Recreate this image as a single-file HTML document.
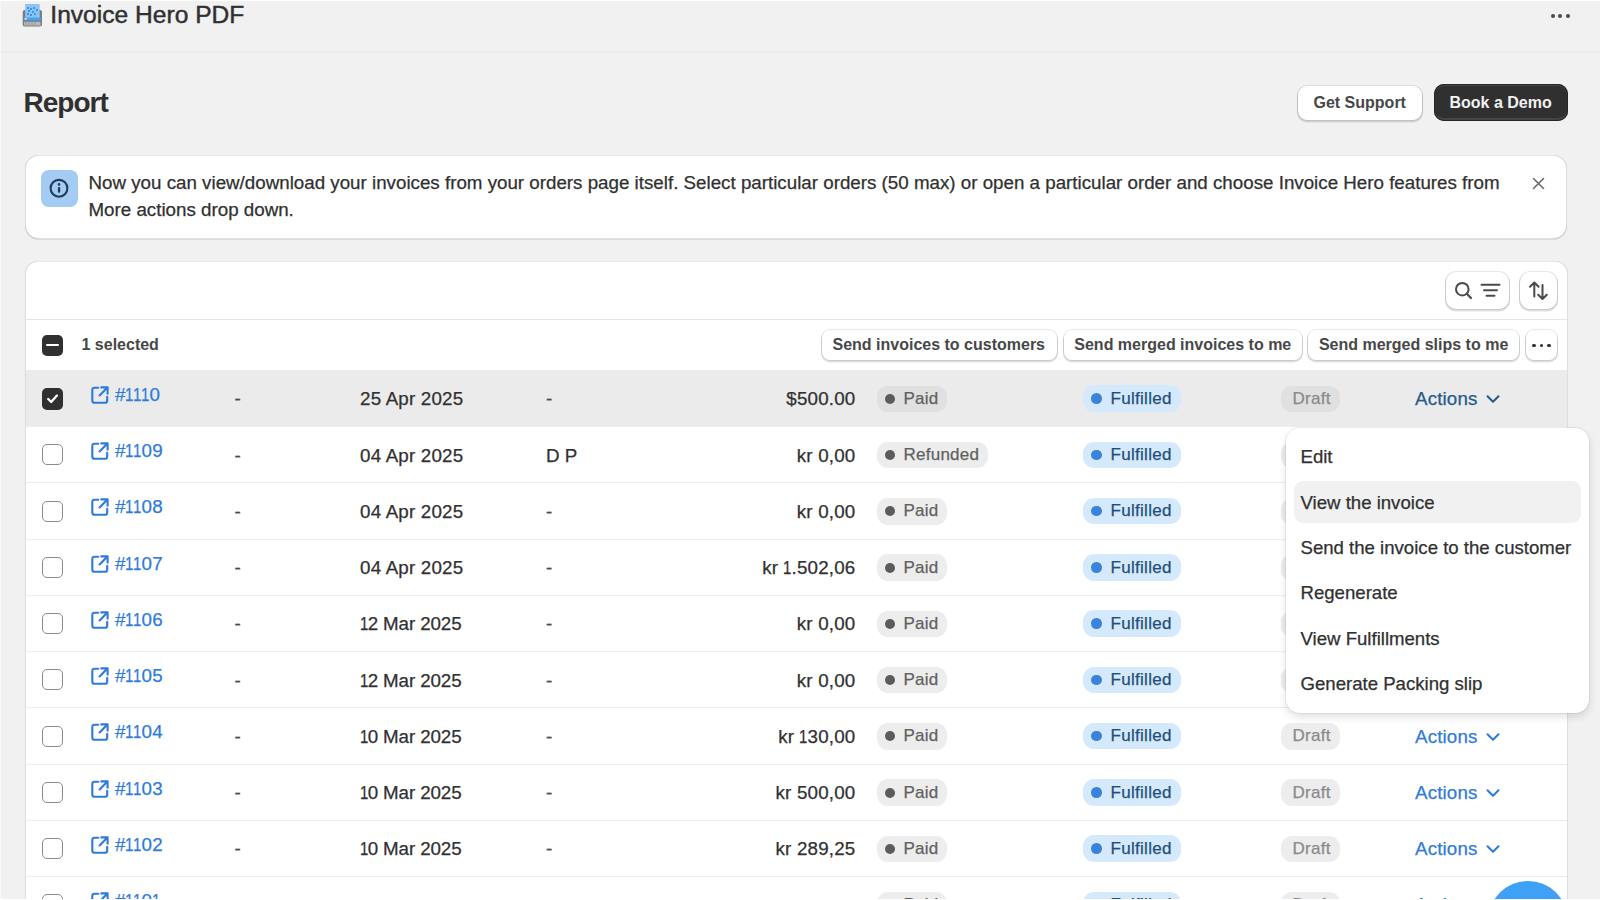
<!DOCTYPE html>
<html><head><meta charset="utf-8"><title>Invoice Hero PDF - Report</title>
<style>
html,body{margin:0;padding:0;width:1600px;height:900px;overflow:hidden;background:#f1f1f1;font-family:"Liberation Sans",sans-serif;color:#303030}
.t{position:absolute;white-space:nowrap;-webkit-text-stroke:0.25px currentColor}
.one{display:inline-block;transform:scaleX(.8);margin:0 -1.35px}
.card{position:absolute;background:#fff;box-shadow:inset 0 1px 0 rgba(204,204,204,.45),inset 1px 0 0 rgba(0,0,0,.13),inset -1px 0 0 rgba(0,0,0,.13),inset 0 -1px 0 rgba(0,0,0,.12),0 1px 1px rgba(0,0,0,.1)}
.btn{position:absolute;background:#fff;border-radius:9px;box-shadow:0 0 0 1px rgba(0,0,0,.09),0 1.5px 0 1px rgba(0,0,0,.12)}
.btn.sm{border-radius:8px}
.btnd{position:absolute;background:#303030;border-radius:10px;box-shadow:inset 0 0 0 1px #262626,inset 0 2px 0 rgba(255,255,255,.1),inset 0 -3px 0 rgba(255,255,255,.1)}
.cb{position:absolute;width:20.5px;height:21px;box-sizing:border-box;border:1.6px solid #8c8c8c;border-radius:5px;background:#fff}
.cb.on{background:#303030;border:none;height:21.3px;width:21px}
.badge{position:absolute;height:26.5px;border-radius:11px}
.pop{position:absolute;background:#fff;border-radius:14px;box-shadow:0 0 0 1px rgba(0,0,0,.06),0 4px 8px rgba(0,0,0,.12)}
</style></head><body>
<div style="position:absolute;left:0;top:0;width:1600px;height:1px;background:#fff"></div><div style="position:absolute;left:0;top:51px;width:1600px;height:2px;background:#ececec"></div><svg style="position:absolute;left:21px;top:3px" width="23" height="25" viewBox="21 3 23 25">
<rect x="22.7" y="10" width="19.3" height="16.5" rx="2" fill="#7c7c7c"/>
<rect x="24" y="21.5" width="16.5" height="4" fill="#b9b9b9"/>
<path d="M26 22v3.5M29 22v3.5M32 22v3.5M35 22v3.5" stroke="#8a8a8a" stroke-width="0.8"/>
<rect x="25.2" y="4" width="14.5" height="17" fill="#8cc4f7"/>
<path d="M27 7h2v2h-2zM30 8h2v2h-2zM33 7h2v2h-2zM28 10h2v2h-2zM32 11h2v2h-2zM27 13h2v2h-2zM30 14h2v2h-2zM34 13h2v2h-2zM36 9h2v2h-2z" fill="#3d95ef"/>
<rect x="24" y="17.5" width="17" height="3" fill="#4a9ff0"/>
<rect x="24.5" y="18.3" width="2.5" height="1.2" fill="#e6f2ff"/>
<rect x="24" y="20.3" width="17" height="1.2" fill="#5c7fa3"/>
</svg><div class="t" style="left:50.30px;top:-1.02px;font-size:24.6px;line-height:32px;color:#303030;font-weight:400;-webkit-text-stroke:0.45px #303030">Invoice Hero PDF</div>
<div style="position:absolute;left:1550.6px;top:13.75px;width:4px;height:4px;border-radius:50%;background:#4a4a4a"></div><div style="position:absolute;left:1558.1px;top:13.75px;width:4px;height:4px;border-radius:50%;background:#4a4a4a"></div><div style="position:absolute;left:1565.5px;top:13.75px;width:4px;height:4px;border-radius:50%;background:#4a4a4a"></div><div class="t" style="left:23.50px;top:85.00px;font-size:28px;line-height:36px;color:#303030;font-weight:700;-webkit-text-stroke:0;letter-spacing:-1px">Report</div>
<div class="btn" style="left:1298px;top:85.5px;width:124px;height:34.5px"></div><div class="t" style="left:1313.50px;top:91.96px;font-size:16px;line-height:21px;color:#474747;font-weight:700;-webkit-text-stroke:0;">Get Support</div>
<div class="btnd" style="left:1434px;top:84px;width:134px;height:37px"></div><div class="t" style="left:1449.50px;top:91.96px;font-size:16px;line-height:21px;color:#f2f2f2;font-weight:700;-webkit-text-stroke:0;">Book a Demo</div>
<div class="card" style="left:25px;top:155px;width:1542px;height:83.5px;border-radius:14px"></div><div style="position:absolute;left:40.5px;top:169.5px;width:37px;height:37.5px;border-radius:8px;background:#a3cbf3"></div><svg style="position:absolute;left:48px;top:177px" width="22" height="22" viewBox="0 0 22 22">
<circle cx="11" cy="11.3" r="8.4" fill="none" stroke="#1f3b57" stroke-width="2.1"/>
<rect x="9.9" y="10" width="2.3" height="5.8" rx="1" fill="#1f3b57"/>
<circle cx="11.05" cy="7.4" r="1.3" fill="#1f3b57"/>
</svg><div class="t" style="left:88.50px;top:170.90px;font-size:18.75px;line-height:24px;color:#303030;font-weight:400;">Now you can view/download your invoices from your orders page itself. Select particular orders (50 max) or open a particular order and choose Invoice Hero features from</div>
<div class="t" style="left:88.50px;top:198.20px;font-size:18.75px;line-height:24px;color:#303030;font-weight:400;">More actions drop down.</div>
<svg style="position:absolute;left:1532px;top:177px" width="13" height="13" viewBox="0 0 13 13">
<path d="M1.5 1.5L11.5 11.5M11.5 1.5L1.5 11.5" stroke="#6b6b6b" stroke-width="1.6" stroke-linecap="round"/>
</svg><div class="card" style="left:25px;top:261px;width:1543px;height:760px;border-radius:13px;overflow:hidden"></div><div style="position:absolute;left:26px;top:319px;width:1541px;height:1px;background:#e6e6e6"></div><div class="btn" style="left:1445.5px;top:272px;width:63px;height:36.5px;border-radius:10px"></div><svg style="position:absolute;left:1450px;top:277px" width="55" height="27" viewBox="0 0 55 27">
<circle cx="12.3" cy="12.2" r="6.3" fill="none" stroke="#4a4a4a" stroke-width="2"/>
<path d="M16.8 16.7L21 21" stroke="#4a4a4a" stroke-width="2.2" stroke-linecap="round"/>
<path d="M31.5 7.8H49.5M34 13.3H47M36.5 18.8H44.5" stroke="#4a4a4a" stroke-width="2" stroke-linecap="round"/>
</svg><div class="btn" style="left:1520px;top:272px;width:36.5px;height:36.5px;border-radius:10px"></div><svg style="position:absolute;left:1525px;top:277px" width="27" height="27" viewBox="0 0 27 27">
<path d="M9.3 19.5V5.5M5 9.8L9.3 5.5L13.6 9.8" fill="none" stroke="#4a4a4a" stroke-width="2" stroke-linecap="round" stroke-linejoin="round"/>
<path d="M17.5 8V22M13.2 17.7L17.5 22L21.8 17.7" fill="none" stroke="#4a4a4a" stroke-width="2" stroke-linecap="round" stroke-linejoin="round"/>
</svg><div class="cb on" style="left:42px;top:334.5px"><div style="position:absolute;left:4.3px;top:9.4px;width:12.5px;height:2.5px;border-radius:1.25px;background:#fff"></div></div><div class="t" style="left:81.50px;top:334.26px;font-size:16px;line-height:21px;color:#474747;font-weight:700;-webkit-text-stroke:0;">1 selected</div>
<div class="btn sm" style="left:822px;top:330px;width:235px;height:30px"></div><div class="t" style="left:832.50px;top:333.96px;font-size:16px;line-height:21px;color:#474747;font-weight:700;-webkit-text-stroke:0;">Send invoices to customers</div>
<div class="btn sm" style="left:1063.8px;top:330px;width:238.5px;height:30px"></div><div class="t" style="left:1074.30px;top:333.96px;font-size:16px;line-height:21px;color:#474747;font-weight:700;-webkit-text-stroke:0;">Send merged invoices to me</div>
<div class="btn sm" style="left:1308.4px;top:330px;width:211px;height:30px"></div><div class="t" style="left:1318.90px;top:333.96px;font-size:16px;line-height:21px;color:#474747;font-weight:700;-webkit-text-stroke:0;">Send merged slips to me</div>
<div class="btn sm" style="left:1526px;top:330px;width:30.5px;height:30px"></div><div style="position:absolute;left:1531.9px;top:343.5px;width:3.8px;height:3.8px;border-radius:50%;background:#303030"></div><div style="position:absolute;left:1539.6px;top:343.5px;width:3.8px;height:3.8px;border-radius:50%;background:#303030"></div><div style="position:absolute;left:1547.4px;top:343.5px;width:3.8px;height:3.8px;border-radius:50%;background:#303030"></div><div style="position:absolute;left:26px;top:369.5px;width:1541px;height:1px;background:#e3e3e3"></div><div style="position:absolute;left:26px;top:370.25px;width:1541px;height:56.25px;background:#ebebeb"></div><div style="position:absolute;left:26px;top:426.00px;width:1541px;height:1px;background:#ececec"></div><div class="cb on" style="left:42px;top:388.25px"><svg style="position:absolute;left:3px;top:3px" width="15" height="15" viewBox="0 0 15 15"><path d="M3.2 8L6.2 11L11.9 4.6" fill="none" stroke="#fff" stroke-width="2.3" stroke-linecap="round" stroke-linejoin="round"/></svg></div><svg style="position:absolute;left:89.5px;top:384.75px" width="20" height="20" viewBox="0 0 20 20">
<path d="M8.3 2.8H4.6C3.3 2.8 2.3 3.8 2.3 5.1V15.4C2.3 16.7 3.3 17.7 4.6 17.7H14.9C16.2 17.7 17.2 16.7 17.2 15.4V11.7" fill="none" stroke="#2e7bd9" stroke-width="2.1" stroke-linecap="round"/>
<path d="M11.3 2.4H17.6V8.7M17.2 2.8L9.6 10.4" fill="none" stroke="#2e7bd9" stroke-width="2.1" stroke-linecap="round" stroke-linejoin="round"/>
</svg><div class="t" style="left:115.00px;top:382.90px;font-size:18.75px;line-height:24px;color:#2e7bd9;font-weight:400;letter-spacing:0.2px">#<span class="one">1</span><span class="one">1</span><span class="one">1</span>0</div>
<div class="t" style="left:234.50px;top:387.35px;font-size:18.75px;line-height:24px;color:#4a4a4a;font-weight:400;">-</div>
<div class="t" style="left:360.00px;top:387.35px;font-size:18.75px;line-height:24px;color:#303030;font-weight:400;letter-spacing:0.2px">25 Apr 2025</div>
<div class="t" style="left:546.00px;top:387.35px;font-size:18.75px;line-height:24px;color:#4a4a4a;font-weight:400;">-</div>
<div class="t" style="right:744.50px;top:387.35px;font-size:18.75px;line-height:24px;color:#303030;font-weight:400;letter-spacing:0.2px">$500.00</div>
<div class="badge" style="left:877px;top:385.55px;width:70px;background:#e0e0e0"></div><div style="position:absolute;left:884.75px;top:393.75px;width:10px;height:10px;border-radius:50%;background:#5c5c5c"></div><div class="t" style="left:903.50px;top:387.76px;font-size:17px;line-height:22px;color:#616161;font-weight:400;letter-spacing:0.25px">Paid</div>
<div class="badge" style="left:1083px;top:385.35px;width:98px;background:#d5e9fc"></div><div style="position:absolute;left:1091px;top:393.35px;width:10.5px;height:10.5px;border-radius:50%;background:#3b82db"></div><div class="t" style="left:1110.50px;top:387.96px;font-size:17px;line-height:22px;color:#1f4f7d;font-weight:400;letter-spacing:0.3px">Fulfilled</div>
<div class="badge" style="left:1281px;top:385.55px;width:59px;background:#e0e0e0"></div><div class="t" style="left:1292.50px;top:387.96px;font-size:17px;line-height:22px;color:#8a8a8a;font-weight:400;letter-spacing:0.3px">Draft</div>
<div class="t" style="left:1415.00px;top:387.00px;font-size:18.75px;line-height:24px;color:#245a8c;font-weight:400;letter-spacing:0.15px">Actions</div>
<svg style="position:absolute;left:1485px;top:393.25px" width="16" height="12" viewBox="0 0 16 12"><path d="M2.5 3.2L8 8.7L13.5 3.2" fill="none" stroke="#245a8c" stroke-width="2" stroke-linecap="round" stroke-linejoin="round"/></svg><div style="position:absolute;left:26px;top:482.25px;width:1541px;height:1px;background:#ececec"></div><div class="cb" style="left:42px;top:444.25px"></div><svg style="position:absolute;left:89.5px;top:441.00px" width="20" height="20" viewBox="0 0 20 20">
<path d="M8.3 2.8H4.6C3.3 2.8 2.3 3.8 2.3 5.1V15.4C2.3 16.7 3.3 17.7 4.6 17.7H14.9C16.2 17.7 17.2 16.7 17.2 15.4V11.7" fill="none" stroke="#2e7bd9" stroke-width="2.1" stroke-linecap="round"/>
<path d="M11.3 2.4H17.6V8.7M17.2 2.8L9.6 10.4" fill="none" stroke="#2e7bd9" stroke-width="2.1" stroke-linecap="round" stroke-linejoin="round"/>
</svg><div class="t" style="left:115.00px;top:439.15px;font-size:18.75px;line-height:24px;color:#2e7bd9;font-weight:400;letter-spacing:0.2px">#<span class="one">1</span><span class="one">1</span>09</div>
<div class="t" style="left:234.50px;top:443.60px;font-size:18.75px;line-height:24px;color:#4a4a4a;font-weight:400;">-</div>
<div class="t" style="left:360.00px;top:443.60px;font-size:18.75px;line-height:24px;color:#303030;font-weight:400;letter-spacing:0.2px">04 Apr 2025</div>
<div class="t" style="left:546.00px;top:443.60px;font-size:18.75px;line-height:24px;color:#303030;font-weight:400;">D P</div>
<div class="t" style="right:744.50px;top:443.60px;font-size:18.75px;line-height:24px;color:#303030;font-weight:400;letter-spacing:0.2px">kr 0,00</div>
<div class="badge" style="left:877px;top:441.80px;width:111px;background:#ededed"></div><div style="position:absolute;left:884.75px;top:450.00px;width:10px;height:10px;border-radius:50%;background:#5c5c5c"></div><div class="t" style="left:903.50px;top:444.01px;font-size:17px;line-height:22px;color:#616161;font-weight:400;letter-spacing:0.25px">Refunded</div>
<div class="badge" style="left:1083px;top:441.60px;width:98px;background:#d5e9fc"></div><div style="position:absolute;left:1091px;top:449.60px;width:10.5px;height:10.5px;border-radius:50%;background:#3b82db"></div><div class="t" style="left:1110.50px;top:444.21px;font-size:17px;line-height:22px;color:#1f4f7d;font-weight:400;letter-spacing:0.3px">Fulfilled</div>
<div class="badge" style="left:1281px;top:441.80px;width:59px;background:#ededed"></div><div class="t" style="left:1292.50px;top:444.21px;font-size:17px;line-height:22px;color:#8a8a8a;font-weight:400;letter-spacing:0.3px">Draft</div>
<div class="t" style="left:1415.00px;top:443.25px;font-size:18.75px;line-height:24px;color:#2e7bd9;font-weight:400;letter-spacing:0.15px">Actions</div>
<svg style="position:absolute;left:1485px;top:449.50px" width="16" height="12" viewBox="0 0 16 12"><path d="M2.5 3.2L8 8.7L13.5 3.2" fill="none" stroke="#2e7bd9" stroke-width="2" stroke-linecap="round" stroke-linejoin="round"/></svg><div style="position:absolute;left:26px;top:538.50px;width:1541px;height:1px;background:#ececec"></div><div class="cb" style="left:42px;top:500.50px"></div><svg style="position:absolute;left:89.5px;top:497.25px" width="20" height="20" viewBox="0 0 20 20">
<path d="M8.3 2.8H4.6C3.3 2.8 2.3 3.8 2.3 5.1V15.4C2.3 16.7 3.3 17.7 4.6 17.7H14.9C16.2 17.7 17.2 16.7 17.2 15.4V11.7" fill="none" stroke="#2e7bd9" stroke-width="2.1" stroke-linecap="round"/>
<path d="M11.3 2.4H17.6V8.7M17.2 2.8L9.6 10.4" fill="none" stroke="#2e7bd9" stroke-width="2.1" stroke-linecap="round" stroke-linejoin="round"/>
</svg><div class="t" style="left:115.00px;top:495.40px;font-size:18.75px;line-height:24px;color:#2e7bd9;font-weight:400;letter-spacing:0.2px">#<span class="one">1</span><span class="one">1</span>08</div>
<div class="t" style="left:234.50px;top:499.85px;font-size:18.75px;line-height:24px;color:#4a4a4a;font-weight:400;">-</div>
<div class="t" style="left:360.00px;top:499.85px;font-size:18.75px;line-height:24px;color:#303030;font-weight:400;letter-spacing:0.2px">04 Apr 2025</div>
<div class="t" style="left:546.00px;top:499.85px;font-size:18.75px;line-height:24px;color:#4a4a4a;font-weight:400;">-</div>
<div class="t" style="right:744.50px;top:499.85px;font-size:18.75px;line-height:24px;color:#303030;font-weight:400;letter-spacing:0.2px">kr 0,00</div>
<div class="badge" style="left:877px;top:498.05px;width:70px;background:#ededed"></div><div style="position:absolute;left:884.75px;top:506.25px;width:10px;height:10px;border-radius:50%;background:#5c5c5c"></div><div class="t" style="left:903.50px;top:500.26px;font-size:17px;line-height:22px;color:#616161;font-weight:400;letter-spacing:0.25px">Paid</div>
<div class="badge" style="left:1083px;top:497.85px;width:98px;background:#d5e9fc"></div><div style="position:absolute;left:1091px;top:505.85px;width:10.5px;height:10.5px;border-radius:50%;background:#3b82db"></div><div class="t" style="left:1110.50px;top:500.46px;font-size:17px;line-height:22px;color:#1f4f7d;font-weight:400;letter-spacing:0.3px">Fulfilled</div>
<div class="badge" style="left:1281px;top:498.05px;width:59px;background:#ededed"></div><div class="t" style="left:1292.50px;top:500.46px;font-size:17px;line-height:22px;color:#8a8a8a;font-weight:400;letter-spacing:0.3px">Draft</div>
<div class="t" style="left:1415.00px;top:499.50px;font-size:18.75px;line-height:24px;color:#2e7bd9;font-weight:400;letter-spacing:0.15px">Actions</div>
<svg style="position:absolute;left:1485px;top:505.75px" width="16" height="12" viewBox="0 0 16 12"><path d="M2.5 3.2L8 8.7L13.5 3.2" fill="none" stroke="#2e7bd9" stroke-width="2" stroke-linecap="round" stroke-linejoin="round"/></svg><div style="position:absolute;left:26px;top:594.75px;width:1541px;height:1px;background:#ececec"></div><div class="cb" style="left:42px;top:556.75px"></div><svg style="position:absolute;left:89.5px;top:553.50px" width="20" height="20" viewBox="0 0 20 20">
<path d="M8.3 2.8H4.6C3.3 2.8 2.3 3.8 2.3 5.1V15.4C2.3 16.7 3.3 17.7 4.6 17.7H14.9C16.2 17.7 17.2 16.7 17.2 15.4V11.7" fill="none" stroke="#2e7bd9" stroke-width="2.1" stroke-linecap="round"/>
<path d="M11.3 2.4H17.6V8.7M17.2 2.8L9.6 10.4" fill="none" stroke="#2e7bd9" stroke-width="2.1" stroke-linecap="round" stroke-linejoin="round"/>
</svg><div class="t" style="left:115.00px;top:551.65px;font-size:18.75px;line-height:24px;color:#2e7bd9;font-weight:400;letter-spacing:0.2px">#<span class="one">1</span><span class="one">1</span>07</div>
<div class="t" style="left:234.50px;top:556.10px;font-size:18.75px;line-height:24px;color:#4a4a4a;font-weight:400;">-</div>
<div class="t" style="left:360.00px;top:556.10px;font-size:18.75px;line-height:24px;color:#303030;font-weight:400;letter-spacing:0.2px">04 Apr 2025</div>
<div class="t" style="left:546.00px;top:556.10px;font-size:18.75px;line-height:24px;color:#4a4a4a;font-weight:400;">-</div>
<div class="t" style="right:744.50px;top:556.10px;font-size:18.75px;line-height:24px;color:#303030;font-weight:400;letter-spacing:0.2px">kr <span class="one">1</span>.502,06</div>
<div class="badge" style="left:877px;top:554.30px;width:70px;background:#ededed"></div><div style="position:absolute;left:884.75px;top:562.50px;width:10px;height:10px;border-radius:50%;background:#5c5c5c"></div><div class="t" style="left:903.50px;top:556.51px;font-size:17px;line-height:22px;color:#616161;font-weight:400;letter-spacing:0.25px">Paid</div>
<div class="badge" style="left:1083px;top:554.10px;width:98px;background:#d5e9fc"></div><div style="position:absolute;left:1091px;top:562.10px;width:10.5px;height:10.5px;border-radius:50%;background:#3b82db"></div><div class="t" style="left:1110.50px;top:556.71px;font-size:17px;line-height:22px;color:#1f4f7d;font-weight:400;letter-spacing:0.3px">Fulfilled</div>
<div class="badge" style="left:1281px;top:554.30px;width:59px;background:#ededed"></div><div class="t" style="left:1292.50px;top:556.71px;font-size:17px;line-height:22px;color:#8a8a8a;font-weight:400;letter-spacing:0.3px">Draft</div>
<div class="t" style="left:1415.00px;top:555.75px;font-size:18.75px;line-height:24px;color:#2e7bd9;font-weight:400;letter-spacing:0.15px">Actions</div>
<svg style="position:absolute;left:1485px;top:562.00px" width="16" height="12" viewBox="0 0 16 12"><path d="M2.5 3.2L8 8.7L13.5 3.2" fill="none" stroke="#2e7bd9" stroke-width="2" stroke-linecap="round" stroke-linejoin="round"/></svg><div style="position:absolute;left:26px;top:651.00px;width:1541px;height:1px;background:#ececec"></div><div class="cb" style="left:42px;top:613.00px"></div><svg style="position:absolute;left:89.5px;top:609.75px" width="20" height="20" viewBox="0 0 20 20">
<path d="M8.3 2.8H4.6C3.3 2.8 2.3 3.8 2.3 5.1V15.4C2.3 16.7 3.3 17.7 4.6 17.7H14.9C16.2 17.7 17.2 16.7 17.2 15.4V11.7" fill="none" stroke="#2e7bd9" stroke-width="2.1" stroke-linecap="round"/>
<path d="M11.3 2.4H17.6V8.7M17.2 2.8L9.6 10.4" fill="none" stroke="#2e7bd9" stroke-width="2.1" stroke-linecap="round" stroke-linejoin="round"/>
</svg><div class="t" style="left:115.00px;top:607.90px;font-size:18.75px;line-height:24px;color:#2e7bd9;font-weight:400;letter-spacing:0.2px">#<span class="one">1</span><span class="one">1</span>06</div>
<div class="t" style="left:234.50px;top:612.35px;font-size:18.75px;line-height:24px;color:#4a4a4a;font-weight:400;">-</div>
<div class="t" style="left:360.00px;top:612.35px;font-size:18.75px;line-height:24px;color:#303030;font-weight:400;letter-spacing:-0.1px"><span class="one">1</span>2 Mar 2025</div>
<div class="t" style="left:546.00px;top:612.35px;font-size:18.75px;line-height:24px;color:#4a4a4a;font-weight:400;">-</div>
<div class="t" style="right:744.50px;top:612.35px;font-size:18.75px;line-height:24px;color:#303030;font-weight:400;letter-spacing:0.2px">kr 0,00</div>
<div class="badge" style="left:877px;top:610.55px;width:70px;background:#ededed"></div><div style="position:absolute;left:884.75px;top:618.75px;width:10px;height:10px;border-radius:50%;background:#5c5c5c"></div><div class="t" style="left:903.50px;top:612.76px;font-size:17px;line-height:22px;color:#616161;font-weight:400;letter-spacing:0.25px">Paid</div>
<div class="badge" style="left:1083px;top:610.35px;width:98px;background:#d5e9fc"></div><div style="position:absolute;left:1091px;top:618.35px;width:10.5px;height:10.5px;border-radius:50%;background:#3b82db"></div><div class="t" style="left:1110.50px;top:612.96px;font-size:17px;line-height:22px;color:#1f4f7d;font-weight:400;letter-spacing:0.3px">Fulfilled</div>
<div class="badge" style="left:1281px;top:610.55px;width:59px;background:#ededed"></div><div class="t" style="left:1292.50px;top:612.96px;font-size:17px;line-height:22px;color:#8a8a8a;font-weight:400;letter-spacing:0.3px">Draft</div>
<div class="t" style="left:1415.00px;top:612.00px;font-size:18.75px;line-height:24px;color:#2e7bd9;font-weight:400;letter-spacing:0.15px">Actions</div>
<svg style="position:absolute;left:1485px;top:618.25px" width="16" height="12" viewBox="0 0 16 12"><path d="M2.5 3.2L8 8.7L13.5 3.2" fill="none" stroke="#2e7bd9" stroke-width="2" stroke-linecap="round" stroke-linejoin="round"/></svg><div style="position:absolute;left:26px;top:707.25px;width:1541px;height:1px;background:#ececec"></div><div class="cb" style="left:42px;top:669.25px"></div><svg style="position:absolute;left:89.5px;top:666.00px" width="20" height="20" viewBox="0 0 20 20">
<path d="M8.3 2.8H4.6C3.3 2.8 2.3 3.8 2.3 5.1V15.4C2.3 16.7 3.3 17.7 4.6 17.7H14.9C16.2 17.7 17.2 16.7 17.2 15.4V11.7" fill="none" stroke="#2e7bd9" stroke-width="2.1" stroke-linecap="round"/>
<path d="M11.3 2.4H17.6V8.7M17.2 2.8L9.6 10.4" fill="none" stroke="#2e7bd9" stroke-width="2.1" stroke-linecap="round" stroke-linejoin="round"/>
</svg><div class="t" style="left:115.00px;top:664.15px;font-size:18.75px;line-height:24px;color:#2e7bd9;font-weight:400;letter-spacing:0.2px">#<span class="one">1</span><span class="one">1</span>05</div>
<div class="t" style="left:234.50px;top:668.60px;font-size:18.75px;line-height:24px;color:#4a4a4a;font-weight:400;">-</div>
<div class="t" style="left:360.00px;top:668.60px;font-size:18.75px;line-height:24px;color:#303030;font-weight:400;letter-spacing:-0.1px"><span class="one">1</span>2 Mar 2025</div>
<div class="t" style="left:546.00px;top:668.60px;font-size:18.75px;line-height:24px;color:#4a4a4a;font-weight:400;">-</div>
<div class="t" style="right:744.50px;top:668.60px;font-size:18.75px;line-height:24px;color:#303030;font-weight:400;letter-spacing:0.2px">kr 0,00</div>
<div class="badge" style="left:877px;top:666.80px;width:70px;background:#ededed"></div><div style="position:absolute;left:884.75px;top:675.00px;width:10px;height:10px;border-radius:50%;background:#5c5c5c"></div><div class="t" style="left:903.50px;top:669.01px;font-size:17px;line-height:22px;color:#616161;font-weight:400;letter-spacing:0.25px">Paid</div>
<div class="badge" style="left:1083px;top:666.60px;width:98px;background:#d5e9fc"></div><div style="position:absolute;left:1091px;top:674.60px;width:10.5px;height:10.5px;border-radius:50%;background:#3b82db"></div><div class="t" style="left:1110.50px;top:669.21px;font-size:17px;line-height:22px;color:#1f4f7d;font-weight:400;letter-spacing:0.3px">Fulfilled</div>
<div class="badge" style="left:1281px;top:666.80px;width:59px;background:#ededed"></div><div class="t" style="left:1292.50px;top:669.21px;font-size:17px;line-height:22px;color:#8a8a8a;font-weight:400;letter-spacing:0.3px">Draft</div>
<div class="t" style="left:1415.00px;top:668.25px;font-size:18.75px;line-height:24px;color:#2e7bd9;font-weight:400;letter-spacing:0.15px">Actions</div>
<svg style="position:absolute;left:1485px;top:674.50px" width="16" height="12" viewBox="0 0 16 12"><path d="M2.5 3.2L8 8.7L13.5 3.2" fill="none" stroke="#2e7bd9" stroke-width="2" stroke-linecap="round" stroke-linejoin="round"/></svg><div style="position:absolute;left:26px;top:763.50px;width:1541px;height:1px;background:#ececec"></div><div class="cb" style="left:42px;top:725.50px"></div><svg style="position:absolute;left:89.5px;top:722.25px" width="20" height="20" viewBox="0 0 20 20">
<path d="M8.3 2.8H4.6C3.3 2.8 2.3 3.8 2.3 5.1V15.4C2.3 16.7 3.3 17.7 4.6 17.7H14.9C16.2 17.7 17.2 16.7 17.2 15.4V11.7" fill="none" stroke="#2e7bd9" stroke-width="2.1" stroke-linecap="round"/>
<path d="M11.3 2.4H17.6V8.7M17.2 2.8L9.6 10.4" fill="none" stroke="#2e7bd9" stroke-width="2.1" stroke-linecap="round" stroke-linejoin="round"/>
</svg><div class="t" style="left:115.00px;top:720.40px;font-size:18.75px;line-height:24px;color:#2e7bd9;font-weight:400;letter-spacing:0.2px">#<span class="one">1</span><span class="one">1</span>04</div>
<div class="t" style="left:234.50px;top:724.85px;font-size:18.75px;line-height:24px;color:#4a4a4a;font-weight:400;">-</div>
<div class="t" style="left:360.00px;top:724.85px;font-size:18.75px;line-height:24px;color:#303030;font-weight:400;letter-spacing:-0.1px"><span class="one">1</span>0 Mar 2025</div>
<div class="t" style="left:546.00px;top:724.85px;font-size:18.75px;line-height:24px;color:#4a4a4a;font-weight:400;">-</div>
<div class="t" style="right:744.50px;top:724.85px;font-size:18.75px;line-height:24px;color:#303030;font-weight:400;letter-spacing:0.2px">kr <span class="one">1</span>30,00</div>
<div class="badge" style="left:877px;top:723.05px;width:70px;background:#ededed"></div><div style="position:absolute;left:884.75px;top:731.25px;width:10px;height:10px;border-radius:50%;background:#5c5c5c"></div><div class="t" style="left:903.50px;top:725.26px;font-size:17px;line-height:22px;color:#616161;font-weight:400;letter-spacing:0.25px">Paid</div>
<div class="badge" style="left:1083px;top:722.85px;width:98px;background:#d5e9fc"></div><div style="position:absolute;left:1091px;top:730.85px;width:10.5px;height:10.5px;border-radius:50%;background:#3b82db"></div><div class="t" style="left:1110.50px;top:725.46px;font-size:17px;line-height:22px;color:#1f4f7d;font-weight:400;letter-spacing:0.3px">Fulfilled</div>
<div class="badge" style="left:1281px;top:723.05px;width:59px;background:#ededed"></div><div class="t" style="left:1292.50px;top:725.46px;font-size:17px;line-height:22px;color:#8a8a8a;font-weight:400;letter-spacing:0.3px">Draft</div>
<div class="t" style="left:1415.00px;top:724.50px;font-size:18.75px;line-height:24px;color:#2e7bd9;font-weight:400;letter-spacing:0.15px">Actions</div>
<svg style="position:absolute;left:1485px;top:730.75px" width="16" height="12" viewBox="0 0 16 12"><path d="M2.5 3.2L8 8.7L13.5 3.2" fill="none" stroke="#2e7bd9" stroke-width="2" stroke-linecap="round" stroke-linejoin="round"/></svg><div style="position:absolute;left:26px;top:819.75px;width:1541px;height:1px;background:#ececec"></div><div class="cb" style="left:42px;top:781.75px"></div><svg style="position:absolute;left:89.5px;top:778.50px" width="20" height="20" viewBox="0 0 20 20">
<path d="M8.3 2.8H4.6C3.3 2.8 2.3 3.8 2.3 5.1V15.4C2.3 16.7 3.3 17.7 4.6 17.7H14.9C16.2 17.7 17.2 16.7 17.2 15.4V11.7" fill="none" stroke="#2e7bd9" stroke-width="2.1" stroke-linecap="round"/>
<path d="M11.3 2.4H17.6V8.7M17.2 2.8L9.6 10.4" fill="none" stroke="#2e7bd9" stroke-width="2.1" stroke-linecap="round" stroke-linejoin="round"/>
</svg><div class="t" style="left:115.00px;top:776.65px;font-size:18.75px;line-height:24px;color:#2e7bd9;font-weight:400;letter-spacing:0.2px">#<span class="one">1</span><span class="one">1</span>03</div>
<div class="t" style="left:234.50px;top:781.10px;font-size:18.75px;line-height:24px;color:#4a4a4a;font-weight:400;">-</div>
<div class="t" style="left:360.00px;top:781.10px;font-size:18.75px;line-height:24px;color:#303030;font-weight:400;letter-spacing:-0.1px"><span class="one">1</span>0 Mar 2025</div>
<div class="t" style="left:546.00px;top:781.10px;font-size:18.75px;line-height:24px;color:#4a4a4a;font-weight:400;">-</div>
<div class="t" style="right:744.50px;top:781.10px;font-size:18.75px;line-height:24px;color:#303030;font-weight:400;letter-spacing:0.2px">kr 500,00</div>
<div class="badge" style="left:877px;top:779.30px;width:70px;background:#ededed"></div><div style="position:absolute;left:884.75px;top:787.50px;width:10px;height:10px;border-radius:50%;background:#5c5c5c"></div><div class="t" style="left:903.50px;top:781.51px;font-size:17px;line-height:22px;color:#616161;font-weight:400;letter-spacing:0.25px">Paid</div>
<div class="badge" style="left:1083px;top:779.10px;width:98px;background:#d5e9fc"></div><div style="position:absolute;left:1091px;top:787.10px;width:10.5px;height:10.5px;border-radius:50%;background:#3b82db"></div><div class="t" style="left:1110.50px;top:781.71px;font-size:17px;line-height:22px;color:#1f4f7d;font-weight:400;letter-spacing:0.3px">Fulfilled</div>
<div class="badge" style="left:1281px;top:779.30px;width:59px;background:#ededed"></div><div class="t" style="left:1292.50px;top:781.71px;font-size:17px;line-height:22px;color:#8a8a8a;font-weight:400;letter-spacing:0.3px">Draft</div>
<div class="t" style="left:1415.00px;top:780.75px;font-size:18.75px;line-height:24px;color:#2e7bd9;font-weight:400;letter-spacing:0.15px">Actions</div>
<svg style="position:absolute;left:1485px;top:787.00px" width="16" height="12" viewBox="0 0 16 12"><path d="M2.5 3.2L8 8.7L13.5 3.2" fill="none" stroke="#2e7bd9" stroke-width="2" stroke-linecap="round" stroke-linejoin="round"/></svg><div style="position:absolute;left:26px;top:876.00px;width:1541px;height:1px;background:#ececec"></div><div class="cb" style="left:42px;top:838.00px"></div><svg style="position:absolute;left:89.5px;top:834.75px" width="20" height="20" viewBox="0 0 20 20">
<path d="M8.3 2.8H4.6C3.3 2.8 2.3 3.8 2.3 5.1V15.4C2.3 16.7 3.3 17.7 4.6 17.7H14.9C16.2 17.7 17.2 16.7 17.2 15.4V11.7" fill="none" stroke="#2e7bd9" stroke-width="2.1" stroke-linecap="round"/>
<path d="M11.3 2.4H17.6V8.7M17.2 2.8L9.6 10.4" fill="none" stroke="#2e7bd9" stroke-width="2.1" stroke-linecap="round" stroke-linejoin="round"/>
</svg><div class="t" style="left:115.00px;top:832.90px;font-size:18.75px;line-height:24px;color:#2e7bd9;font-weight:400;letter-spacing:0.2px">#<span class="one">1</span><span class="one">1</span>02</div>
<div class="t" style="left:234.50px;top:837.35px;font-size:18.75px;line-height:24px;color:#4a4a4a;font-weight:400;">-</div>
<div class="t" style="left:360.00px;top:837.35px;font-size:18.75px;line-height:24px;color:#303030;font-weight:400;letter-spacing:-0.1px"><span class="one">1</span>0 Mar 2025</div>
<div class="t" style="left:546.00px;top:837.35px;font-size:18.75px;line-height:24px;color:#4a4a4a;font-weight:400;">-</div>
<div class="t" style="right:744.50px;top:837.35px;font-size:18.75px;line-height:24px;color:#303030;font-weight:400;letter-spacing:0.2px">kr 289,25</div>
<div class="badge" style="left:877px;top:835.55px;width:70px;background:#ededed"></div><div style="position:absolute;left:884.75px;top:843.75px;width:10px;height:10px;border-radius:50%;background:#5c5c5c"></div><div class="t" style="left:903.50px;top:837.76px;font-size:17px;line-height:22px;color:#616161;font-weight:400;letter-spacing:0.25px">Paid</div>
<div class="badge" style="left:1083px;top:835.35px;width:98px;background:#d5e9fc"></div><div style="position:absolute;left:1091px;top:843.35px;width:10.5px;height:10.5px;border-radius:50%;background:#3b82db"></div><div class="t" style="left:1110.50px;top:837.96px;font-size:17px;line-height:22px;color:#1f4f7d;font-weight:400;letter-spacing:0.3px">Fulfilled</div>
<div class="badge" style="left:1281px;top:835.55px;width:59px;background:#ededed"></div><div class="t" style="left:1292.50px;top:837.96px;font-size:17px;line-height:22px;color:#8a8a8a;font-weight:400;letter-spacing:0.3px">Draft</div>
<div class="t" style="left:1415.00px;top:837.00px;font-size:18.75px;line-height:24px;color:#2e7bd9;font-weight:400;letter-spacing:0.15px">Actions</div>
<svg style="position:absolute;left:1485px;top:843.25px" width="16" height="12" viewBox="0 0 16 12"><path d="M2.5 3.2L8 8.7L13.5 3.2" fill="none" stroke="#2e7bd9" stroke-width="2" stroke-linecap="round" stroke-linejoin="round"/></svg><div style="position:absolute;left:26px;top:932.25px;width:1541px;height:1px;background:#ececec"></div><div class="cb" style="left:42px;top:894.25px"></div><svg style="position:absolute;left:89.5px;top:891.00px" width="20" height="20" viewBox="0 0 20 20">
<path d="M8.3 2.8H4.6C3.3 2.8 2.3 3.8 2.3 5.1V15.4C2.3 16.7 3.3 17.7 4.6 17.7H14.9C16.2 17.7 17.2 16.7 17.2 15.4V11.7" fill="none" stroke="#2e7bd9" stroke-width="2.1" stroke-linecap="round"/>
<path d="M11.3 2.4H17.6V8.7M17.2 2.8L9.6 10.4" fill="none" stroke="#2e7bd9" stroke-width="2.1" stroke-linecap="round" stroke-linejoin="round"/>
</svg><div class="t" style="left:115.00px;top:889.15px;font-size:18.75px;line-height:24px;color:#2e7bd9;font-weight:400;letter-spacing:0.2px">#<span class="one">1</span><span class="one">1</span>0<span class="one">1</span></div>
<div class="t" style="left:234.50px;top:893.60px;font-size:18.75px;line-height:24px;color:#4a4a4a;font-weight:400;">-</div>
<div class="t" style="left:360.00px;top:893.60px;font-size:18.75px;line-height:24px;color:#303030;font-weight:400;letter-spacing:-0.1px"><span class="one">1</span>0 Mar 2025</div>
<div class="t" style="left:546.00px;top:893.60px;font-size:18.75px;line-height:24px;color:#4a4a4a;font-weight:400;">-</div>
<div class="t" style="right:744.50px;top:893.60px;font-size:18.75px;line-height:24px;color:#303030;font-weight:400;letter-spacing:0.2px">kr 395,27</div>
<div class="badge" style="left:877px;top:891.80px;width:70px;background:#ededed"></div><div style="position:absolute;left:884.75px;top:900.00px;width:10px;height:10px;border-radius:50%;background:#5c5c5c"></div><div class="t" style="left:903.50px;top:894.01px;font-size:17px;line-height:22px;color:#616161;font-weight:400;letter-spacing:0.25px">Paid</div>
<div class="badge" style="left:1083px;top:891.60px;width:98px;background:#d5e9fc"></div><div style="position:absolute;left:1091px;top:899.60px;width:10.5px;height:10.5px;border-radius:50%;background:#3b82db"></div><div class="t" style="left:1110.50px;top:894.21px;font-size:17px;line-height:22px;color:#1f4f7d;font-weight:400;letter-spacing:0.3px">Fulfilled</div>
<div class="badge" style="left:1281px;top:891.80px;width:59px;background:#ededed"></div><div class="t" style="left:1292.50px;top:894.21px;font-size:17px;line-height:22px;color:#8a8a8a;font-weight:400;letter-spacing:0.3px">Draft</div>
<div class="t" style="left:1415.00px;top:893.25px;font-size:18.75px;line-height:24px;color:#2e7bd9;font-weight:400;letter-spacing:0.15px">Actions</div>
<svg style="position:absolute;left:1485px;top:899.50px" width="16" height="12" viewBox="0 0 16 12"><path d="M2.5 3.2L8 8.7L13.5 3.2" fill="none" stroke="#2e7bd9" stroke-width="2" stroke-linecap="round" stroke-linejoin="round"/></svg><div class="pop" style="left:1285.5px;top:427.5px;width:303px;height:285px"></div><div style="position:absolute;left:1293.7px;top:481px;width:287.6px;height:41.6px;border-radius:9px;background:#f1f1f1"></div><div class="t" style="left:1300.50px;top:445.06px;font-size:18.6px;line-height:24px;color:#303030;font-weight:400;">Edit</div>
<div class="t" style="left:1300.50px;top:490.52px;font-size:18.6px;line-height:24px;color:#303030;font-weight:400;">View the invoice</div>
<div class="t" style="left:1300.50px;top:535.98px;font-size:18.6px;line-height:24px;color:#303030;font-weight:400;">Send the invoice to the customer</div>
<div class="t" style="left:1300.50px;top:581.44px;font-size:18.6px;line-height:24px;color:#303030;font-weight:400;">Regenerate</div>
<div class="t" style="left:1300.50px;top:626.90px;font-size:18.6px;line-height:24px;color:#303030;font-weight:400;">View Fulfillments</div>
<div class="t" style="left:1300.50px;top:672.36px;font-size:18.6px;line-height:24px;color:#303030;font-weight:400;">Generate Packing slip</div>
<div style="position:absolute;left:1487.8px;top:881.2px;width:80px;height:80px;border-radius:50%;background:#3ea1f6"></div><div style="position:absolute;left:0;top:899px;width:1600px;height:1px;background:#fff"></div><div style="position:absolute;left:0;top:0;width:1px;height:900px;background:rgba(255,255,255,.5)"></div>
</body></html>
